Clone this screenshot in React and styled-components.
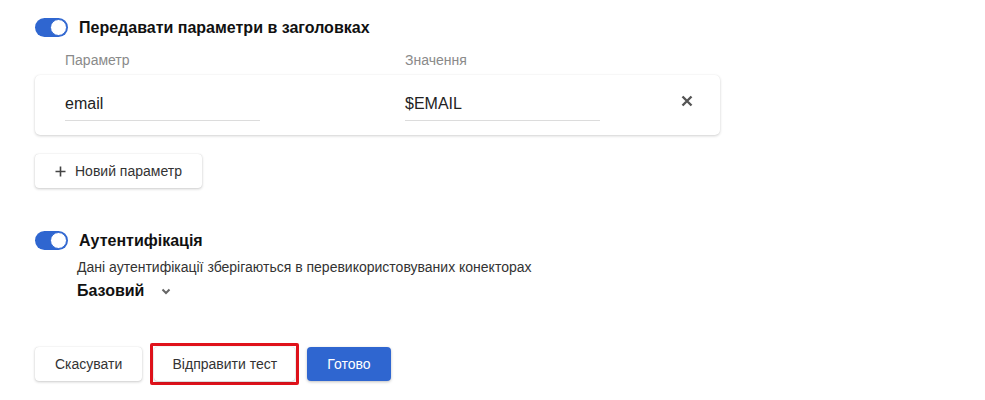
import styled, { createGlobalStyle } from "styled-components";

const Global = createGlobalStyle`
  body {
    margin: 0;
    background: #fff;
    font-family: "Liberation Sans", Arial, sans-serif;
    color: #222;
  }
`;

const Page = styled.div`
  padding: 17px 35px 0;
  display: flex;
  flex-direction: column;
`;

const ToggleRow = styled.div`
  display: flex;
  align-items: center;
  gap: 11px;
  height: 21px;
`;

const Switch = styled.span`
  position: relative;
  width: 33px;
  height: 19px;
  border-radius: 10px;
  background: #2f66d0;
  flex-shrink: 0;
  &::after {
    content: "";
    position: absolute;
    right: 1px;
    top: 1px;
    width: 15px;
    height: 15px;
    border-radius: 50%;
    background: #fff;
    border: 1px solid #2f66d0;
    box-sizing: content-box;
  }
`;

const Title = styled.span`
  font-size: 16px;
  font-weight: 700;
  color: #111;
`;

const Labels = styled.div`
  display: flex;
  padding-left: 30px;
  margin-top: 14px;
  font-size: 14px;
  color: #8a8a8a;
  height: 17px;
  & > span:first-child {
    width: 340px;
  }
`;

const Card = styled.div`
  margin-top: 6px;
  width: 685px;
  height: 60px;
  box-sizing: border-box;
  background: #fff;
  border-radius: 5px;
  box-shadow: 0 1px 3px rgba(0, 0, 0, 0.18), 0 0 1px rgba(0, 0, 0, 0.08);
  display: flex;
  align-items: center;
  padding: 0 25px 0 30px;
`;

const Field = styled.div`
  width: 195px;
  margin-right: ${(p) => p.$gap}px;
  font-size: 16px;
  color: #222;
  padding-bottom: 8px;
  border-bottom: 1px solid #dcdcdc;
  line-height: 17px;
  margin-top: 5px;
`;

const Close = styled.span`
  margin-left: auto;
  display: flex;
  margin-top: -8px;
  margin-right: 2px;
`;

const Button = styled.button`
  font-family: inherit;
  font-size: 14px;
  height: 34px;
  padding: 0 ${(p) => (p.$px === undefined ? 20 : p.$px)}px;
  border-radius: 4px;
  border: none;
  white-space: nowrap;
  background: ${(p) => (p.$primary ? "#2f66d0" : "#fff")};
  color: ${(p) => (p.$primary ? "#fff" : "#333")};
  box-shadow: ${(p) =>
    p.$primary
      ? "0 1px 3px rgba(0,0,0,0.25)"
      : "0 1px 3px rgba(0,0,0,0.2), 0 0 1px rgba(0,0,0,0.15)"};
  display: inline-flex;
  align-items: center;
  justify-content: center;
  gap: 9px;
  cursor: pointer;
`;

const AddRow = styled.div`
  margin-top: 19px;
`;

const AuthBlock = styled.div`
  margin-top: 42px;
  display: flex;
  flex-direction: column;
`;

const Desc = styled.div`
  margin-top: 8px;
  padding-left: 42px;
  font-size: 14px;
  color: #333;
`;

const Select = styled.div`
  margin-top: 7px;
  padding-left: 42px;
  display: flex;
  align-items: center;
  gap: 17px;
  font-size: 16px;
  font-weight: 700;
  color: #111;
`;

const Footer = styled.div`
  margin-top: 43px;
  display: flex;
  align-items: center;
  gap: 8px;
`;

const Highlight = styled.div`
  border: 3px solid #e0121b;
  border-radius: 2px;
  padding: 1px;
  display: flex;
`;

function App() {
  return (
    <Page>
      <Global />
      <ToggleRow>
        <Switch />
        <Title>Передавати параметри в заголовках</Title>
      </ToggleRow>
      <Labels>
        <span>Параметр</span>
        <span>Значення</span>
      </Labels>
      <Card>
        <Field $gap={145}>email</Field>
        <Field $gap={0}>$EMAIL</Field>
        <Close>
          <svg width="12" height="12" viewBox="0 0 12 12">
            <path d="M1.5 1.5 L10.5 10.5 M10.5 1.5 L1.5 10.5" stroke="#555" strokeWidth="2.4" />
          </svg>
        </Close>
      </Card>
      <AddRow>
        <Button $px={20}>
          <svg width="11" height="11" viewBox="0 0 11 11">
            <path d="M5.5 0.5 V10.5 M0.5 5.5 H10.5" stroke="#444" strokeWidth="1.6" />
          </svg>
          Новий параметр
        </Button>
      </AddRow>
      <AuthBlock>
        <ToggleRow>
          <Switch />
          <Title>Аутентифікація</Title>
        </ToggleRow>
        <Desc>Дані аутентифікації зберігаються в перевикористовуваних конекторах</Desc>
        <Select>
          Базовий
          <svg width="10" height="7" viewBox="0 0 10 7">
            <path d="M1.5 1.5 L5 5 L8.5 1.5" stroke="#666" strokeWidth="2" fill="none" />
          </svg>
        </Select>
      </AuthBlock>
      <Footer>
        <Button $px={20}>Скасувати</Button>
        <Highlight>
          <Button $px={0} style={{ width: 141 }}>Відправити тест</Button>
        </Highlight>
        <Button $primary $px={20}>Готово</Button>
      </Footer>
    </Page>
  );
}

export default App;
